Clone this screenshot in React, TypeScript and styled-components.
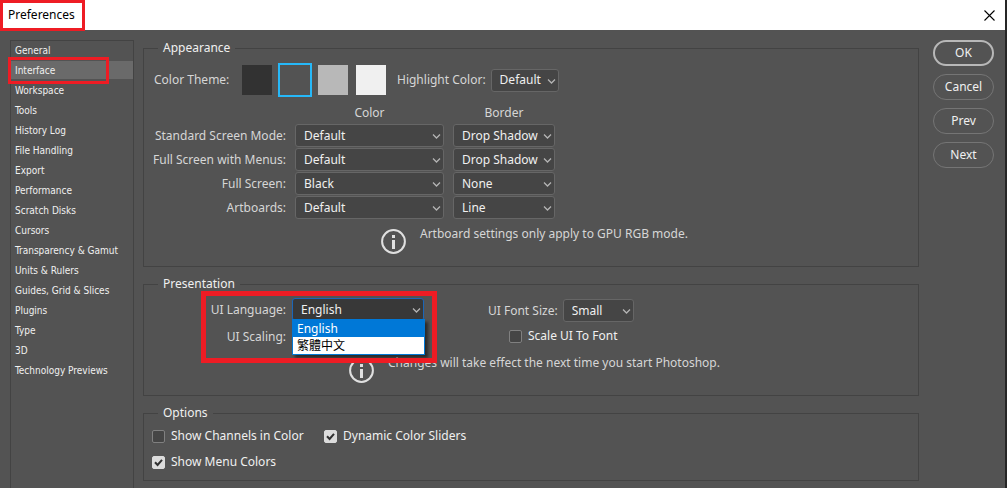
import React, { useId } from "react";
import styled, { createGlobalStyle } from "styled-components";

const uiFont = '"Noto Sans", "Noto Sans CJK TC", sans-serif';
const listFont = '"DejaVu Sans Condensed", "Noto Sans", sans-serif';

const GlobalStyle = createGlobalStyle`
  *, *::before, *::after { box-sizing: border-box; }
  body {
    margin: 0;
    background: #535353;
    font-family: ${uiFont};
    font-size: 12px;
    line-height: 16px;
    color: #f0f0f0;
  }
  button, select, input { font: inherit; color: inherit; margin: 0; }
`;

const Window = styled.div`
  display: flex;
  flex-direction: column;
  min-height: 100vh;
  border-right: 2px solid #262626;
  background: #535353;
`;

const TitleBar = styled.header`
  display: flex;
  align-items: center;
  justify-content: space-between;
  height: 30px;
  padding: 0 10px 0 8px;
  background: #fff;
  color: #000;
`;

const Title = styled.h1`
  position: relative;
  margin: 0;
  font-size: 12px;
  font-weight: 400;
  line-height: 16px;
`;

const CloseButton = styled.button`
  display: flex;
  padding: 0;
  border: 0;
  background: none;
`;

const Callout = styled.span<{ $weight: number; $inset: string }>`
  position: absolute;
  inset: ${(p) => p.$inset};
  border: ${(p) => p.$weight}px solid #ee1c24;
  pointer-events: none;
  z-index: 3;
`;

const Body = styled.div`
  display: flex;
  flex: 1;
  padding: 10px 11px 0 10px;
`;

const Sidebar = styled.nav`
  flex: none;
  width: 124px;
  border: 1px solid #434343;
  border-bottom: 0;
`;

const SectionList = styled.ul`
  display: flex;
  flex-direction: column;
  gap: 2px;
  margin: 0;
  padding: 0;
  list-style: none;
`;

const SectionItem = styled.li`
  position: relative;
`;

const SectionButton = styled.button<{ $active: boolean }>`
  display: block;
  width: 100%;
  height: 18px;
  padding: 1px 4px 0;
  border: 0;
  background: ${(p) => (p.$active ? "#6a6a6a" : "transparent")};
  font-family: ${listFont};
  font-size: 10px;
  line-height: 17px;
  text-align: left;
  white-space: nowrap;
`;

const Main = styled.main`
  display: flex;
  flex: 1;
  flex-direction: column;
  gap: 9px;
  min-width: 0;
  margin: 0 14px 7px 9px;
`;

const Group = styled.fieldset<{ $bottom: number }>`
  position: relative;
  min-width: 0;
  margin: 0;
  padding: 0 8px ${(p) => p.$bottom}px;
  border: 1px solid #434343;
`;

const Legend = styled.legend`
  margin-left: 6px;
  padding: 0 5px;
`;

const ThemeRow = styled.div`
  display: flex;
  align-items: center;
  padding: 7px 0 0 2px;
`;

const Caption = styled.span`
  color: #d6d6d6;
  white-space: nowrap;
`;

const FieldLabel = styled.label`
  color: #d6d6d6;
  text-align: right;
  white-space: nowrap;
`;

const ThemeName = styled(Caption)`
  width: 86px;
`;

const Swatches = styled.div`
  display: flex;
  gap: 4px;
  margin-right: 9px;
`;

const Swatch = styled.input<{ $color: string }>`
  appearance: none;
  width: 34px;
  height: 34px;
  border: 2px solid transparent;
  background: ${(p) => p.$color} padding-box;

  &:checked { border-color: #26b8f8; }
`;

const SelectBox = styled.span<{ $width: number }>`
  position: relative;
  display: block;
  flex: none;
  width: ${(p) => p.$width}px;
`;

const SelectControl = styled.select<{ $open: boolean }>`
  appearance: none;
  display: block;
  width: 100%;
  height: 23px;
  padding: 0 12px 0 8px;
  border: 1px solid ${(p) => (p.$open ? "#1b66b8" : "#666")};
  border-radius: 3px;
  background: ${(p) => (p.$open ? "#383838" : "#454545")};
  line-height: 20px;
  outline: 0;
`;

const Chevron = styled.svg`
  position: absolute;
  top: 9px;
  right: 3px;
  pointer-events: none;
`;

const ScreenGrid = styled.div`
  display: grid;
  grid-template-columns: 134px 149px 102px;
  column-gap: 9px;
  row-gap: 1px;
  align-items: center;
  margin-top: 8px;
`;

const ColumnHead = styled(Caption)`
  margin-bottom: 2px;
  text-align: center;
`;

const Note = styled.p<{ $indent: number }>`
  display: flex;
  gap: 14px;
  margin: 7px 0 0;
  padding-left: ${(p) => p.$indent}px;
  color: #d6d6d6;
`;

const NoteIcon = styled.svg`
  flex: none;
  margin-top: 3px;
`;

const Columns = styled.div`
  display: flex;
  gap: 64px;
  padding-top: 6px;
`;

const LanguageColumn = styled.div`
  display: grid;
  grid-template-columns: 134px 132px;
  column-gap: 6px;
  row-gap: 4px;
  align-items: center;
`;

const FontColumn = styled.div`
  display: flex;
  flex-direction: column;
  gap: 6px;
  padding-top: 1px;
`;

const InlineField = styled.div`
  display: flex;
  align-items: center;
  gap: 5px;
`;

const Menu = styled.ul`
  position: absolute;
  top: 21px;
  left: 0;
  z-index: 2;
  width: 133px;
  margin: 0;
  padding: 0;
  border: 1px solid #0078d7;
  background: #fff;
  box-shadow: 3px 3px 3px rgba(0, 0, 0, 0.5);
  list-style: none;
`;

const MenuItem = styled.li<{ $active: boolean }>`
  height: 17px;
  padding: 0 4px;
  background: ${(p) => (p.$active ? "#0078d7" : "#fff")};
  color: ${(p) => (p.$active ? "#fff" : "#000")};
  line-height: 17px;
`;

const CheckLabel = styled.label`
  display: flex;
  align-items: center;
  gap: 6px;
  white-space: nowrap;
`;

const CheckBox = styled.span`
  position: relative;
  display: flex;
  flex: none;
`;

const CheckInput = styled.input`
  appearance: none;
  width: 13px;
  height: 13px;
  border: 1px solid #808080;
  border-radius: 2px;
  background: #454545;

  &:checked { border-color: #dcdcdc; background: #dcdcdc; }
  & + svg { display: none; }
  &:checked + svg { display: block; }
`;

const Tick = styled.svg`
  position: absolute;
  inset: 0;
  pointer-events: none;
`;

const ScaleOption = styled.div`
  padding-left: 21px;
`;

const OptionGrid = styled.div`
  display: grid;
  grid-template-columns: 172px 1fr;
  row-gap: 10px;
  padding-top: 7px;
`;

const Actions = styled.div`
  display: flex;
  flex: none;
  flex-direction: column;
  gap: 8px;
  width: 61px;
`;

const ActionButton = styled.button<{ $primary: boolean }>`
  height: 26px;
  padding: 0;
  border: ${(p) => (p.$primary ? "2px solid #b8b8b8" : "1px solid #757575")};
  border-radius: 13px;
  background: none;
`;

const sections = [
  "General", "Interface", "Workspace", "Tools", "History Log", "File Handling",
  "Export", "Performance", "Scratch Disks", "Cursors", "Transparency & Gamut",
  "Units & Rulers", "Guides, Grid & Slices", "Plugins", "Type", "3D",
  "Technology Previews",
];

const themes = [
  { name: "Darkest", color: "#323232" },
  { name: "Dark", color: "#535353" },
  { name: "Light", color: "#b8b8b8" },
  { name: "Lightest", color: "#f0f0f0" },
];

const screenModes = [
  { label: "Standard Screen Mode:", color: "Default", border: "Drop Shadow" },
  { label: "Full Screen with Menus:", color: "Default", border: "Drop Shadow" },
  { label: "Full Screen:", color: "Black", border: "None" },
  { label: "Artboards:", color: "Default", border: "Line" },
];

type DropdownProps = {
  value: string;
  width: number;
  id?: string;
  label?: string;
  open?: boolean;
  children?: React.ReactNode;
};

function Dropdown({ value, width, id, label, open = false, children }: DropdownProps) {
  return (
    <SelectBox $width={width}>
      <SelectControl id={id} aria-label={label} $open={open} defaultValue={value}>
        <option>{value}</option>
      </SelectControl>
      <Chevron width="9" height="7" viewBox="0 0 9 7" fill="none" stroke="#b4b4b4" strokeWidth="1.3">
        <path d="M1 1.5 4.5 5 8 1.5" />
      </Chevron>
      {children}
    </SelectBox>
  );
}

function Check({ label, checked = false }: { label: string; checked?: boolean }) {
  return (
    <CheckLabel>
      <CheckBox>
        <CheckInput type="checkbox" defaultChecked={checked} />
        <Tick width="13" height="13" viewBox="0 0 13 13" fill="none" stroke="#303030" strokeWidth="2">
          <path d="M3 6.2 5.6 9 10 3.8" />
        </Tick>
      </CheckBox>
      {label}
    </CheckLabel>
  );
}

function InfoNote({ text, indent }: { text: string; indent: number }) {
  return (
    <Note $indent={indent}>
      <NoteIcon width="25" height="25" viewBox="0 0 25 25" fill="none" aria-hidden="true">
        <circle cx="12.5" cy="12.5" r="11.4" stroke="#e0e0e0" strokeWidth="2" />
        <path d="M11 6h3v3h-3zM11 11h3v9h-3z" fill="#e0e0e0" />
      </NoteIcon>
      <span>{text}</span>
    </Note>
  );
}

export default function App() {
  const uid = useId();
  return (
    <Window>
      <GlobalStyle />
      <TitleBar>
        <Title>
          Preferences
          <Callout $weight={3} $inset="-7px -10px -8px -8px" />
        </Title>
        <CloseButton type="button" aria-label="Close">
          <svg width="11" height="11" viewBox="0 0 11 11" stroke="#000" strokeWidth="1.1">
            <path d="M.5.5l10 10M10.5.5l-10 10" />
          </svg>
        </CloseButton>
      </TitleBar>
      <Body>
        <Sidebar aria-label="Sections">
          <SectionList>
            {sections.map((name) => (
              <SectionItem key={name}>
                <SectionButton type="button" $active={name === "Interface"}>{name}</SectionButton>
                {name === "Interface" && <Callout $weight={3} $inset="-4px 24px -5px -3px" />}
              </SectionItem>
            ))}
          </SectionList>
        </Sidebar>
        <Main>
          <Group $bottom={12}>
            <Legend>Appearance</Legend>
            <ThemeRow>
              <ThemeName>Color Theme:</ThemeName>
              <Swatches role="radiogroup" aria-label="Color Theme">
                {themes.map((t) => (
                  <Swatch key={t.name} type="radio" name="theme" aria-label={t.name} $color={t.color} defaultChecked={t.name === "Dark"} />
                ))}
              </Swatches>
              <InlineField>
                <FieldLabel htmlFor={`${uid}-hl`}>Highlight Color:</FieldLabel>
                <Dropdown id={`${uid}-hl`} value="Default" width={68} />
              </InlineField>
            </ThemeRow>
            <ScreenGrid>
              <span />
              <ColumnHead>Color</ColumnHead>
              <ColumnHead>Border</ColumnHead>
              {screenModes.map((m, i) => (
                <React.Fragment key={m.label}>
                  <FieldLabel htmlFor={`${uid}-mode${i}`}>{m.label}</FieldLabel>
                  <Dropdown id={`${uid}-mode${i}`} value={m.color} width={149} />
                  <Dropdown label={`${m.label} border`} value={m.border} width={102} />
                </React.Fragment>
              ))}
            </ScreenGrid>
            <InfoNote indent={229} text="Artboard settings only apply to GPU RGB mode." />
          </Group>
          <Group $bottom={12}>
            <Legend>Presentation</Legend>
            <Columns>
              <LanguageColumn>
                <FieldLabel htmlFor={`${uid}-lang`}>UI Language:</FieldLabel>
                <Dropdown id={`${uid}-lang`} value="English" width={132} open>
                  <Menu role="listbox" aria-label="UI Language">
                    <MenuItem role="option" aria-selected $active>English</MenuItem>
                    <MenuItem role="option" aria-selected={false} $active={false}>繁體中文</MenuItem>
                  </Menu>
                  <Callout $weight={5} $inset="-7px -13px -42px -91px" />
                </Dropdown>
                <FieldLabel htmlFor={`${uid}-scale`}>UI Scaling:</FieldLabel>
                <Dropdown id={`${uid}-scale`} value="Auto" width={132} />
              </LanguageColumn>
              <FontColumn>
                <InlineField>
                  <FieldLabel htmlFor={`${uid}-font`}>UI Font Size:</FieldLabel>
                  <Dropdown id={`${uid}-font`} value="Small" width={71} />
                </InlineField>
                <ScaleOption>
                  <Check label="Scale UI To Font" />
                </ScaleOption>
              </FontColumn>
            </Columns>
            <InfoNote indent={197} text="Changes will take effect the next time you start Photoshop." />
          </Group>
          <Group $bottom={10}>
            <Legend>Options</Legend>
            <OptionGrid>
              <Check label="Show Channels in Color" />
              <Check label="Dynamic Color Sliders" checked />
              <Check label="Show Menu Colors" checked />
            </OptionGrid>
          </Group>
        </Main>
        <Actions>
          {["OK", "Cancel", "Prev", "Next"].map((name) => (
            <ActionButton key={name} type="button" $primary={name === "OK"}>{name}</ActionButton>
          ))}
        </Actions>
      </Body>
    </Window>
  );
}
